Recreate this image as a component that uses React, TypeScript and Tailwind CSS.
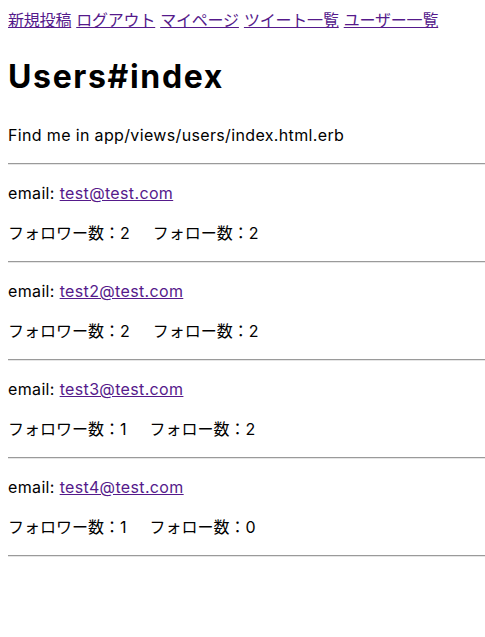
import React from "react";

const users = [
  { email: "test@test.com", followers: 2, following: 2 },
  { email: "test2@test.com", followers: 2, following: 2 },
  { email: "test3@test.com", followers: 1, following: 2 },
  { email: "test4@test.com", followers: 1, following: 0 },
];

const Hr = () => (
  <div className="mt-4 mb-4 h-[2px] border-t border-t-[#9a9a9a] border-b border-b-[#e6e6e6]" />
);

export default function App() {
  return (
    <div
      className="min-h-[637px] bg-white pl-2 pt-2 text-[16px] leading-[24px] text-black tracking-[0.35px]"
      style={{ fontFamily: 'Inter, "Noto Sans CJK JP", sans-serif' }}
    >
      <nav className="flex gap-[5px] tracking-[-0.2px]">
        {["新規投稿", "ログアウト", "マイページ", "ツイート一覧", "ユーザー一覧"].map((t) => (
          <a key={t} href="#" className="text-[#551a8b] underline">
            {t}
          </a>
        ))}
      </nav>
      <h1 className="mt-[21px] mb-[22px] text-[32px] leading-[48px] font-bold tracking-[1.65px]">
        Users#index
      </h1>
      <p>Find me in app/views/users/index.html.erb</p>
      <Hr />
      {users.map((u) => (
        <div key={u.email}>
          <p>
            email:{" "}
            <a href="#" className="text-[#551a8b] underline">
              {u.email}
            </a>
          </p>
          <p className="mt-4 tracking-normal">
            フォロワー数：{u.followers}
            <span className="inline-block w-[23px]" />
            フォロー数：{u.following}
          </p>
          <Hr />
        </div>
      ))}
    </div>
  );
}
